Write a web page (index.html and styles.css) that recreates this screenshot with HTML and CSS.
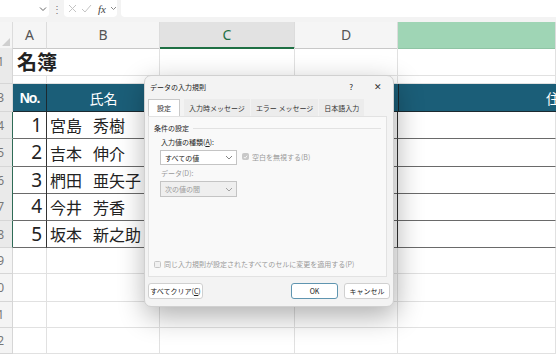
FILE: index.html
```html
<!DOCTYPE html>
<html lang="ja">
<head>
<meta charset="UTF-8">
<meta name="viewport" content="width=device-width, initial-scale=1.0">
<title>データの入力規則</title>
<link rel="stylesheet" href="styles.css">
</head>
<body>

<div class="fbar">
    <div class="namebox">
        <svg width="8" height="6" viewBox="0 0 8 6"><path d="M1 1.5 L4 4.5 L7 1.5" fill="none" stroke="#666" stroke-width="1"/></svg>
    </div>
    <div class="dots">⋮</div>
    <div class="fx-tools">
        <svg width="9" height="9" viewBox="0 0 9 9"><path d="M1 1 L8 8 M8 1 L1 8" stroke="#c4c4c4" stroke-width="1"/></svg>
        <svg width="11" height="9" viewBox="0 0 11 9"><path d="M1 5 L4 8 L10 1" fill="none" stroke="#c4c4c4" stroke-width="1"/></svg>
        <span class="fx">fx</span>
        <svg width="7" height="5" viewBox="0 0 7 5"><path d="M1 1 L3.5 3.5 L6 1" fill="none" stroke="#888" stroke-width="1"/></svg>
    </div>
    <div class="formula"></div>
</div>

<div class="sheet">
    <div class="row head">
        <div class="corner"><svg width="8" height="8" viewBox="0 0 8 8"><path d="M8 0 L8 8 L0 8 Z" fill="#cfcfcf"/></svg></div>
        <div class="col">A</div>
        <div class="col">B</div>
        <div class="col col-sel">C</div>
        <div class="col">D</div>
        <div class="col col-hi"></div>
    </div>

    <div class="row r27">
        <div class="rh">1</div>
        <div class="cell title">名簿</div>
        <div class="cell"></div>
        <div class="cell"></div>
        <div class="cell"></div>
        <div class="cell"></div>
    </div>
    <div class="row r9">
        <div class="rh"></div>
        <div class="cell"></div>
        <div class="cell"></div>
        <div class="cell"></div>
        <div class="cell"></div>
        <div class="cell"></div>
    </div>
    <div class="row r28">
        <div class="rh">3</div>
        <div class="cell band no">No.</div>
        <div class="cell band name-h">氏名</div>
        <div class="cell band"></div>
        <div class="cell band"></div>
        <div class="cell band addr">住所</div>
    </div>

    <div class="row r27 data">
        <div class="rh">4</div>
        <div class="cell num">1</div>
        <div class="cell person"><span>宮島</span><span>秀樹</span></div>
        <div class="cell"></div>
        <div class="cell"></div>
        <div class="cell"></div>
    </div>
    <div class="row r28 data">
        <div class="rh">5</div>
        <div class="cell num">2</div>
        <div class="cell person"><span>吉本</span><span>伸介</span></div>
        <div class="cell"></div>
        <div class="cell"></div>
        <div class="cell"></div>
    </div>
    <div class="row r26 data">
        <div class="rh">6</div>
        <div class="cell num">3</div>
        <div class="cell person"><span>椚田</span><span>亜矢子</span></div>
        <div class="cell"></div>
        <div class="cell"></div>
        <div class="cell"></div>
    </div>
    <div class="row r28 data">
        <div class="rh">7</div>
        <div class="cell num">4</div>
        <div class="cell person"><span>今井</span><span>芳香</span></div>
        <div class="cell"></div>
        <div class="cell"></div>
        <div class="cell"></div>
    </div>
    <div class="row r27 data">
        <div class="rh">8</div>
        <div class="cell num">5</div>
        <div class="cell person"><span>坂本</span><span>新之助</span></div>
        <div class="cell"></div>
        <div class="cell"></div>
        <div class="cell"></div>
    </div>

    <div class="row r26">
        <div class="rh light">9</div>
        <div class="cell"></div>
        <div class="cell"></div>
        <div class="cell"></div>
        <div class="cell"></div>
        <div class="cell"></div>
    </div>
    <div class="row r28">
        <div class="rh light">10</div>
        <div class="cell"></div>
        <div class="cell"></div>
        <div class="cell"></div>
        <div class="cell"></div>
        <div class="cell"></div>
    </div>
    <div class="row r26">
        <div class="rh light">11</div>
        <div class="cell"></div>
        <div class="cell"></div>
        <div class="cell"></div>
        <div class="cell"></div>
        <div class="cell"></div>
    </div>
    <div class="row r26">
        <div class="rh light">12</div>
        <div class="cell"></div>
        <div class="cell"></div>
        <div class="cell"></div>
        <div class="cell"></div>
        <div class="cell"></div>
    </div>
</div>

<div class="dialog">
    <div class="dlg-title">
        <span class="dlg-name">データの入力規則</span>
        <span class="dlg-help">?</span>
        <span class="dlg-close">✕</span>
    </div>

    <div class="tabs">
        <div class="tab active">設定</div>
        <div class="tab">入力時メッセージ</div>
        <div class="tab">エラー メッセージ</div>
        <div class="tab">日本語入力</div>
    </div>

    <div class="panel">
        <div class="group">
            <span>条件の設定</span>
            <div class="group-line"></div>
        </div>

        <div class="label">入力値の種類(<u>A</u>):</div>
        <div class="field-row">
            <div class="select">
                <span>すべての値</span>
                <svg width="8" height="5" viewBox="0 0 8 5"><path d="M1 1 L4 4 L7 1" fill="none" stroke="#777" stroke-width="0.9"/></svg>
            </div>
            <div class="check-item muted">
                <span class="box checked"><svg width="6" height="6" viewBox="0 0 6 6"><path d="M1 3 L2.5 4.5 L5 1.5" fill="none" stroke="#fff" stroke-width="1"/></svg></span>
                <span>空白を無視する(B)</span>
            </div>
        </div>

        <div class="label muted">データ(D):</div>
        <div class="select disabled">
            <span>次の値の間</span>
            <svg width="8" height="5" viewBox="0 0 8 5"><path d="M1 1 L4 4 L7 1" fill="none" stroke="#999" stroke-width="0.9"/></svg>
        </div>

        <div class="spacer"></div>

        <div class="check-item muted">
            <span class="box"></span>
            <span>同じ入力規則が設定されたすべてのセルに変更を適用する(P)</span>
        </div>
    </div>

    <div class="dlg-buttons">
        <button class="btn">すべてクリア(<u>C</u>)</button>
        <div class="btn-gap"></div>
        <button class="btn btn-ok">OK</button>
        <button class="btn">キャンセル</button>
    </div>
</div>

</body>
</html>
```

FILE: styles.css
```css
body {
    font-family: "Noto Sans CJK JP", "Noto Sans", sans-serif;
    background: #fff;
    color: #222;
    margin: 0;
    padding: 0;
    width: 556px;
    height: 354px;
    overflow: hidden;
    position: relative;
}

/* formula bar */

.fbar {
    display: flex;
    height: 17px;
    padding-bottom: 5px;
    background: #f3f3f3;
}

.namebox {
    width: 49px;
    background: #fff;
    display: flex;
    align-items: center;
    justify-content: flex-end;
    padding-right: 2px;
    box-sizing: border-box;
    border-radius: 0 0 4px 0;
}

.dots {
    width: 15px;
    text-align: center;
    color: #777;
    font-size: 10px;
    line-height: 17px;
}

.fx-tools {
    width: 53px;
    background: #fff;
    border-radius: 0 0 4px 4px;
    display: flex;
    align-items: center;
    gap: 4px;
    padding-left: 4px;
    box-sizing: border-box;
}

.fx {
    font-family: "Liberation Serif", serif;
    font-style: italic;
    font-size: 11px;
    color: #444;
    margin-left: 2px;
}

.formula {
    flex: 1;
    background: #fff;
    margin-left: 4px;
    border-radius: 0 0 0 4px;
}

/* sheet */

.row {
    display: grid;
    grid-template-columns: 13px 34px 113px 135px 103px 1fr;
}

.r9 { height: 9px; }
.r26 { height: 26px; }
.r27 { height: 27px; }
.r28 { height: 28px; }

.head {
    height: 26px;
    background: #f5f5f5;
}

.corner {
    display: flex;
    align-items: flex-end;
    justify-content: flex-end;
    padding: 0 2px 2px 0;
    border-right: 1px solid #dcdcdc;
    border-bottom: 1px solid #c8c8c8;
}

.col {
    box-sizing: border-box;
    border-right: 1px solid #dcdcdc;
    border-bottom: 1px solid #c8c8c8;
    font-family: "Noto Sans", sans-serif;
    font-size: 14px;
    color: #555;
    text-align: center;
    line-height: 25px;
}

.col-sel {
    background: #e2e2e2;
    color: #1f7044;
    border-bottom: 2px solid #1f7044;
}

.col-hi {
    background: #9fd5b5;
    border-bottom: 1px solid #8fc4a4;
}

.rh {
    box-sizing: border-box;
    background: #eaeaea;
    border-right: 1px solid #d6d6d6;
    border-bottom: 1px solid #d6d6d6;
    font-family: "Noto Sans", sans-serif;
    font-size: 12px;
    color: #777;
    padding-right: 8px;
    overflow: hidden;
    white-space: nowrap;
    display: flex;
    align-items: center;
    justify-content: flex-end;
}

.rh.light {
    background: #f4f4f4;
}

.cell {
    box-sizing: border-box;
    border-right: 1px solid #e1e1e1;
    border-bottom: 1px solid #e1e1e1;
}

.title {
    font-size: 20px;
    font-weight: bold;
    white-space: nowrap;
    padding-left: 4px;
    line-height: 27px;
    border-right: none;
}

.band {
    background: #1b5e78;
    color: #fff;
    border-bottom: 1px solid #1c2a30;
    border-right: none;
    display: flex;
    align-items: center;
    white-space: nowrap;
}

.no {
    justify-content: center;
    font-family: "Liberation Sans", sans-serif;
    font-weight: bold;
    font-size: 14px;
    letter-spacing: -1px;
    border-right: 1px solid #1c2a30;
}

.name-h {
    justify-content: center;
    font-size: 14px;
}

.addr {
    border-left: 1px solid #1c2a30;
    padding-left: 147px;
    font-size: 14px;
}

.data .rh {
    border-right: 1px solid #2f6b56;
}

.data .cell {
    border-bottom: 1px solid #6a6a6a;
}

.data .num {
    border-right: 1px solid #333;
    text-align: right;
    padding-right: 4px;
    font-family: "Noto Sans", sans-serif;
    font-size: 19px;
    line-height: 26px;
}

.data .person {
    border-right: 1px solid #333;
    display: flex;
    align-items: center;
    gap: 11px;
    padding-left: 3px;
    font-size: 16px;
    white-space: nowrap;
}

.data .cell:nth-child(5) {
    border-right: 1px solid #333;
}

/* dialog */

.dialog {
    position: absolute;
    left: 144px;
    top: 75px;
    width: 250px;
    height: 232px;
    box-sizing: border-box;
    background: #f3f3f3;
    border: 1px solid #d0d0d0;
    border-radius: 7px;
    box-shadow: 2px 9px 28px rgba(0, 0, 0, 0.32);
    display: flex;
    flex-direction: column;
    font-size: 7px;
    padding: 0 3px 0 3px;
}

.dlg-title {
    display: flex;
    align-items: center;
    height: 21px;
    padding-left: 2px;
}

.dlg-name {
    flex: 1;
}

.dlg-help {
    font-size: 8px;
    margin-right: 21px;
}

.dlg-close {
    font-size: 9px;
    margin-right: 8px;
    color: #333;
}

.tabs {
    display: flex;
    height: 17px;
    margin-top: 2px;
    gap: 1px;
}

.tab {
    display: flex;
    align-items: center;
    padding: 0 5px;
    background: #ececec;
    color: #333;
}

.tab.active {
    background: #fff;
    border: 1px solid #c9c9c9;
    border-bottom: none;
    padding: 0 8px;
    margin-right: 3px;
}

.panel {
    height: 161px;
    box-sizing: border-box;
    background: #f9f9f9;
    border: 1px solid #e2e2e2;
    margin-right: 3px;
    padding: 5px 5px 7px 5px;
    display: flex;
    flex-direction: column;
}

.group {
    display: flex;
    align-items: center;
    gap: 4px;
    height: 12px;
}

.group-line {
    flex: 1;
    height: 1px;
    background: #e2e2e2;
}

.label {
    margin: 3px 0 0 7px;
    height: 11px;
    line-height: 11px;
}

.field-row {
    display: flex;
    align-items: center;
    gap: 5px;
}

.select {
    width: 77px;
    height: 15px;
    box-sizing: border-box;
    margin-left: 6px;
    margin-top: 2px;
    background: #fff;
    border: 1px solid #c4c4c4;
    display: flex;
    align-items: center;
    justify-content: space-between;
    padding: 0 3px 0 4px;
}

.select.disabled {
    background: #efefef;
    color: #9a9a9a;
    height: 16px;
}

.muted {
    color: #9a9a9a;
}

.check-item {
    display: flex;
    align-items: center;
    gap: 3px;
}

.box {
    width: 7px;
    height: 7px;
    box-sizing: border-box;
    border: 1px solid #c6c6c6;
    border-radius: 1.5px;
    background: #f1f1f1;
    display: flex;
    align-items: center;
    justify-content: center;
}

.box.checked {
    background: #c8c8c8;
    border-color: #c8c8c8;
}

.spacer {
    flex: 1;
}

.dlg-buttons {
    display: flex;
    align-items: center;
    gap: 6px;
    margin-top: 6px;
}

.btn {
    font-family: "Noto Sans CJK JP", "Noto Sans", sans-serif;
    font-size: 7px;
    color: #222;
    background: #fff;
    border: 1px solid #d0d0d0;
    border-radius: 3px;
    height: 16px;
    width: 46px;
    padding: 0;
}

.btn:first-child {
    width: 55px;
}

.btn-gap {
    flex: 1;
}

.btn-ok {
    width: 47px;
    border: 1px solid #5f95b0;
}
```
